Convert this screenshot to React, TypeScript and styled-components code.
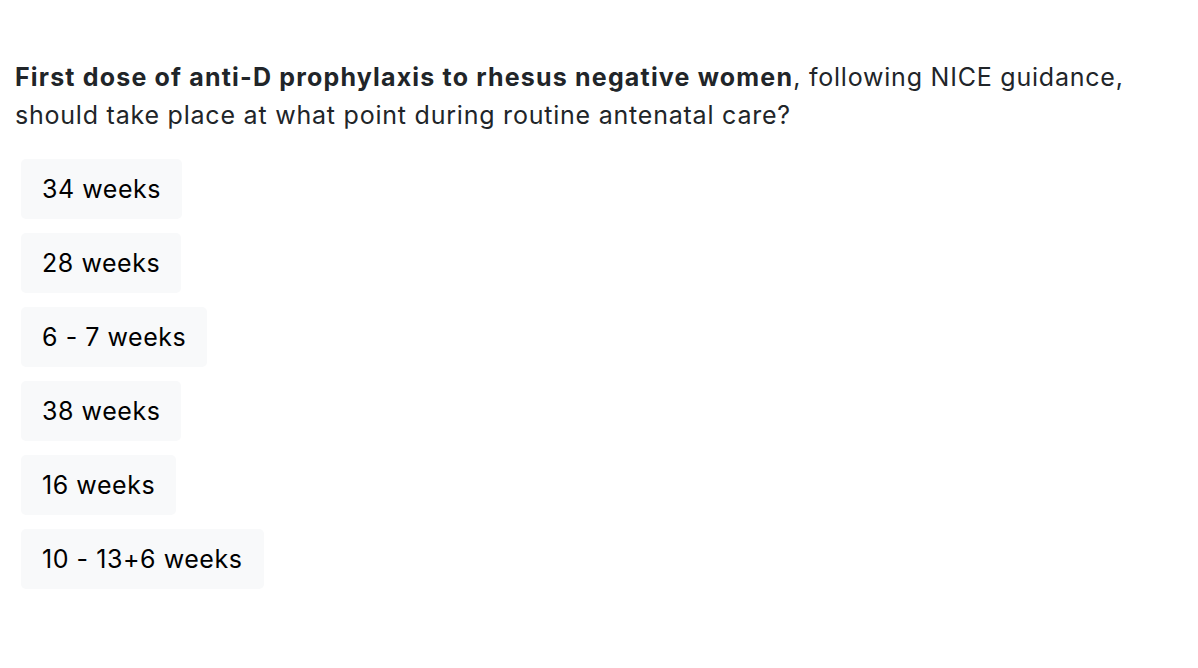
import React from "react";
import styled, { createGlobalStyle } from "styled-components";

const Global = createGlobalStyle`
  html, body { margin: 0; padding: 0; background: #ffffff; }
  body { font-family: Inter, "Liberation Sans", sans-serif; color: #212529; }
`;

const Page = styled.main`
  padding: 58px 15px 0 15px;
  display: flex;
  flex-direction: column;
`;

const Question = styled.p`
  margin: 0;
  font-size: 25px;
  line-height: 38px;
  letter-spacing: 0.78px;
  color: #212529;
  max-width: 1160px;
`;

const Emphasis = styled.strong`
  font-weight: 700;
  letter-spacing: 1.18px;
`;

const Options = styled.ul`
  list-style: none;
  margin: 25px 0 0 6px;
  padding: 0;
  display: flex;
  flex-direction: column;
  align-items: flex-start;
  gap: 14px;
`;

const Option = styled.button`
  height: 60px;
  padding: 0 21px;
  border: none;
  border-radius: 5px;
  background: #f8f9fa;
  color: #000000;
  font-family: Inter, "Liberation Sans", sans-serif;
  font-size: 25px;
  letter-spacing: 0.55px;
  cursor: pointer;
  display: flex;
  align-items: center;
`;

const options = ["34 weeks", "28 weeks", "6 - 7 weeks", "38 weeks", "16 weeks", "10 - 13+6 weeks"];

export default function App() {
  return (
    <>
      <Global />
      <Page>
        <Question>
          <Emphasis>First dose of anti-D prophylaxis to rhesus negative women</Emphasis>, following NICE guidance,
          should take place at what point during routine antenatal care?
        </Question>
        <Options>
          {options.map((o) => (
            <li key={o}>
              <Option type="button">{o}</Option>
            </li>
          ))}
        </Options>
      </Page>
    </>
  );
}
